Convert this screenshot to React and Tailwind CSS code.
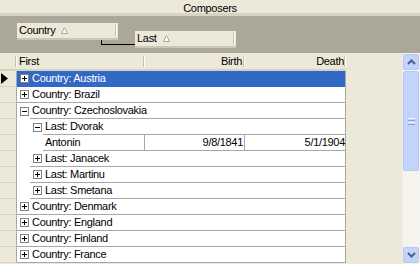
import React from "react";

const font = { fontFamily: '"Liberation Sans", Arial, sans-serif' };

const rows = [
  { kind: "group", level: 0, label: "Country: Austria", selected: true },
  { kind: "group", level: 0, label: "Country: Brazil" },
  { kind: "group", level: 0, label: "Country: Czechoslovakia", open: true },
  { kind: "group", level: 1, label: "Last: Dvorak", open: true },
  { kind: "data", first: "Antonin", birth: "9/8/1841", death: "5/1/1904" },
  { kind: "group", level: 1, label: "Last: Janacek" },
  { kind: "group", level: 1, label: "Last: Martinu" },
  { kind: "group", level: 1, label: "Last: Smetana" },
  { kind: "group", level: 0, label: "Country: Denmark" },
  { kind: "group", level: 0, label: "Country: England" },
  { kind: "group", level: 0, label: "Country: Finland" },
  { kind: "group", level: 0, label: "Country: France" },
];

function SortTriangle() {
  return (
    <svg width="7" height="7" viewBox="0 0 7 7" className="shrink-0">
      <path d="M3.5 0.5 L6.5 6.5 L0.5 6.5 Z" fill="#ffffff" stroke="#aca899" strokeWidth="1" />
    </svg>
  );
}

function ExpandBox({ open }) {
  return (
    <div className="w-[9px] h-[9px] border border-[#808080] bg-white flex items-center justify-center relative">
      <div className="w-[5px] h-[1px] bg-black" />
      {!open && <div className="absolute w-[1px] h-[5px] bg-black" />}
    </div>
  );
}

function HeaderSep() {
  return <div className="w-[2px] h-[11px] shrink-0 border-l border-[#c5c2b2] bg-white" />;
}

function GroupBox({ label }) {
  return (
    <div className="w-[101px] h-[17px] bg-[#ece9d8] border-b-2 border-[#cbc7b8] flex items-center">
      <span className="pl-[2px] leading-[13px]">{label}</span>
      <div className="ml-[6px]">
        <SortTriangle />
      </div>
      <div className="flex-1" />
      <HeaderSep />
      <div className="w-[1px]" />
    </div>
  );
}

function Selector({ selected }) {
  return (
    <div className="w-[17px] shrink-0 bg-[#ece9d8] border-r border-r-[#a8a8a8] border-b border-b-[#d8d4c4] flex items-center pl-[1px]">
      {selected && (
        <svg width="7" height="11" viewBox="0 0 7 11">
          <path d="M0 0 L7 5.5 L0 11 Z" fill="#000" />
        </svg>
      )}
    </div>
  );
}

function Row({ row }) {
  if (row.kind === "data") {
    return (
      <div className="flex h-[16px]">
        <Selector />
        <div className="flex w-[329px] bg-white border-r border-[#a8a8a8]">
          <div className="w-[26px] shrink-0" />
          <div className="w-[102px] shrink-0 border-b border-r border-[#a8a8a8] pl-[2px] leading-[15px]">{row.first}</div>
          <div className="w-[100px] shrink-0 border-b border-r border-[#a8a8a8] pr-[1px] text-right leading-[15px]">{row.birth}</div>
          <div className="flex-1 border-b border-[#a8a8a8] text-right leading-[15px]">{row.death}</div>
        </div>
      </div>
    );
  }
  const sel = row.selected;
  return (
    <div className="flex h-[16px]">
      <Selector selected={sel} />
      <div className={`flex w-[329px] border-r border-r-[#a8a8a8] ${sel ? "bg-[#316ac5] text-white" : "bg-white"}`}>
        {row.level === 1 && <div className="w-[13px] shrink-0" />}
        <div className={`w-[13px] shrink-0 flex items-center pl-[3px] ${row.open ? "" : sel ? "border-b border-b-[#316ac5]" : "border-b border-b-[#a8a8a8]"}`}>
          <ExpandBox open={row.open} />
        </div>
        <div className={`flex-1 pl-[2px] leading-[15px] border-b ${sel ? "border-b-[#316ac5]" : "border-b-[#a8a8a8]"}`}>{row.label}</div>
      </div>
    </div>
  );
}

function ScrollBtn({ down }) {
  return (
    <div className="h-[16px] w-[16px] rounded-[2px] border border-[#b6c8f3] bg-[#c3d4fc] flex items-center justify-center">
      <svg width="9" height="6" viewBox="0 0 9 6">
        <path d={down ? "M1 1 L4.5 4.5 L8 1" : "M1 5 L4.5 1.5 L8 5"} fill="none" stroke="#4d6185" strokeWidth="2" />
      </svg>
    </div>
  );
}

export default function App() {
  return (
    <div className="w-[420px] h-[264px] overflow-hidden bg-[#ece9d8] text-[11px] tracking-[-0.3px] text-black flex flex-col" style={font}>
      {/* caption */}
      <div className="h-[16px] shrink-0 border-b-[3px] border-[#d8d4c5] flex justify-center items-start">
        <span className="pt-[2px] leading-[12px]">Composers</span>
      </div>

      {/* group by area */}
      <div className="h-[37px] shrink-0 bg-[#aca899] flex pl-[17px] pt-[7px]">
        <div className="w-[118px] flex flex-col">
          <GroupBox label="Country" />
          <div className="ml-[84px] w-[35px] h-[5px] border-l border-b border-black" />
        </div>
        <div className="mt-[8px]">
          <GroupBox label="Last" />
        </div>
      </div>

      {/* grid body */}
      <div className="flex flex-1 min-h-0">
        <div className="w-[346px] shrink-0 flex flex-col">
          <div className="flex h-[18px] shrink-0 border-b-2 border-[#d6d2c2] bg-[#ece9d8]">
            <div className="w-[17px] flex items-center justify-end">
              <HeaderSep />
            </div>
            <div className="w-[128px] flex items-center">
              <span className="flex-1 pl-[2px] leading-[13px]">First</span>
              <HeaderSep />
            </div>
            <div className="w-[100px] flex items-center">
              <span className="flex-1 text-right pr-[1px] leading-[13px]">Birth</span>
              <HeaderSep />
            </div>
            <div className="w-[101px] flex items-center">
              <span className="flex-1 text-right leading-[13px]">Death</span>
              <HeaderSep />
            </div>
          </div>
          {rows.map((r, i) => (
            <Row key={i} row={r} />
          ))}
        </div>
        <div className="flex-1" />
        <div className="w-[18px] shrink-0 bg-[#f4f3ee] border-l border-[#eeede5] flex flex-col pt-[1px] pb-[1px]">
          <ScrollBtn />
          <div className="mt-[1px] h-[100px] w-[16px] rounded-[2px] border border-[#b6c8f3] bg-[#c3d4fc] flex flex-col items-center justify-center gap-[1px]">
            <div className="w-[7px] h-[1px] bg-[#eef2fd]" />
            <div className="w-[7px] h-[1px] bg-[#8ca0d4]" />
            <div className="w-[7px] h-[1px] bg-[#eef2fd]" />
            <div className="w-[7px] h-[1px] bg-[#8ca0d4]" />
          </div>
          <div className="flex-1" />
          <ScrollBtn down />
        </div>
      </div>
    </div>
  );
}
